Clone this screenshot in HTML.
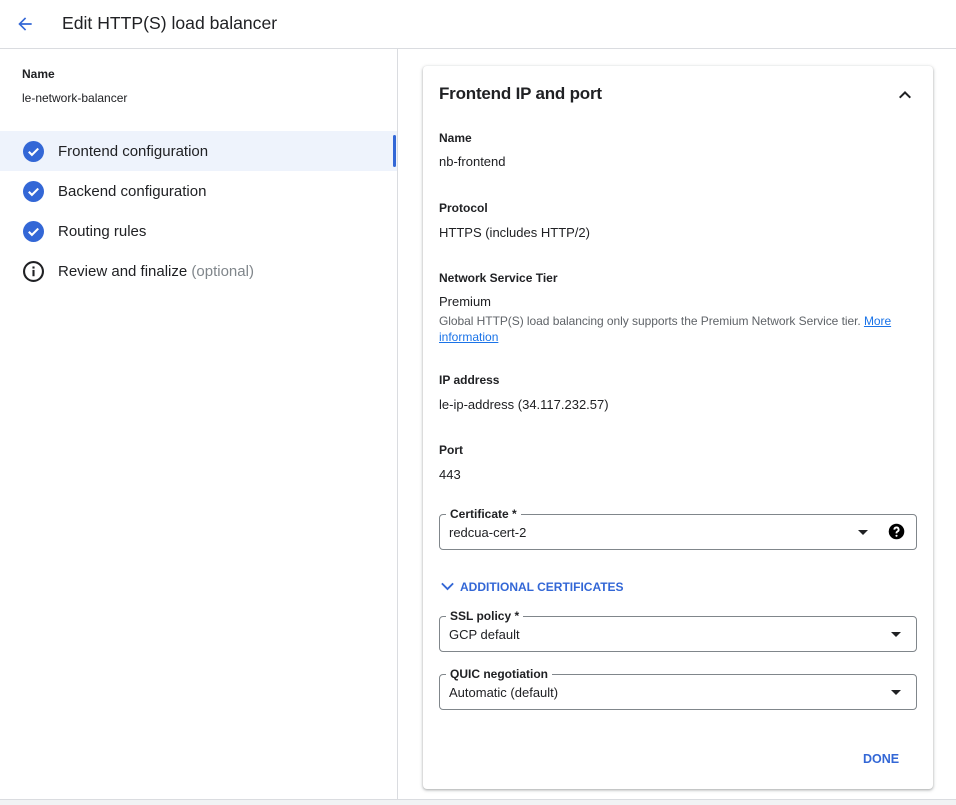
<!DOCTYPE html>
<html><head><meta charset="utf-8"><style>
*{margin:0;padding:0;box-sizing:border-box}
body{width:956px;height:805px;overflow:hidden;background:#fff;font-family:"Liberation Sans",Arial,sans-serif;color:#202124;position:relative}
.a{position:absolute;white-space:nowrap}
.lbl{font-size:13px;font-weight:bold;line-height:16px}
.val{font-size:13px;line-height:16px}
.field{position:absolute;left:439px;width:478px;height:36px;border:1px solid #80868b;border-radius:4px}
.field .fl{position:absolute;left:6px;top:-9px;background:#fff;padding:0 4px;font-size:12px;font-weight:bold;line-height:16px}
.field .fv{position:absolute;left:9px;top:10px;font-size:13px;line-height:16px}
.tri{position:absolute;width:0;height:0;border-left:5px solid transparent;border-right:5px solid transparent;border-top:5px solid #202124}
</style></head><body>
<svg class="a" style="left:15px;top:14px" width="20" height="20" viewBox="0 0 24 24"><path d="M20 11H7.83l5.59-5.59L12 4l-8 8 8 8 1.41-1.41L7.83 13H20v-2z" fill="#3367d6"/></svg>
<div class="a" style="left:62px;top:12px;font-size:17.6px;line-height:22px">Edit HTTP(S) load balancer</div>
<div class="a" style="left:0;top:48px;width:956px;height:1px;background:#dadce0"></div>
<div class="a" style="left:397px;top:49px;width:1px;height:751px;background:#dadce0"></div>
<div class="a" style="left:0;top:799px;width:956px;height:6px;background:#f1f3f4;border-top:1px solid #dadce0"></div>

<div class="a lbl" style="left:22px;top:66px;font-size:12px">Name</div>
<div class="a val" style="left:22px;top:90px;font-size:12px">le-network-balancer</div>

<div class="a" style="left:0;top:131px;width:397px;height:40px;background:#eef3fc"></div>
<div class="a" style="left:393px;top:135px;width:3px;height:32px;background:#3367d6;border-radius:2px"></div>
<svg class="a" style="left:23px;top:141px" width="21" height="21" viewBox="0 0 20 20"><circle cx="10" cy="10" r="10" fill="#3367d6"/><path d="M5.5 10.2l3 3 6-6" stroke="#fff" stroke-width="2" fill="none"/></svg>
<div class="a" style="left:58px;top:143px;font-size:15px;line-height:18px">Frontend configuration</div>
<svg class="a" style="left:23px;top:181px" width="21" height="21" viewBox="0 0 20 20"><circle cx="10" cy="10" r="10" fill="#3367d6"/><path d="M5.5 10.2l3 3 6-6" stroke="#fff" stroke-width="2" fill="none"/></svg>
<div class="a" style="left:58px;top:183px;font-size:15px;line-height:18px">Backend configuration</div>
<svg class="a" style="left:23px;top:221px" width="21" height="21" viewBox="0 0 20 20"><circle cx="10" cy="10" r="10" fill="#3367d6"/><path d="M5.5 10.2l3 3 6-6" stroke="#fff" stroke-width="2" fill="none"/></svg>
<div class="a" style="left:58px;top:223px;font-size:15px;line-height:18px">Routing rules</div>
<svg class="a" style="left:23px;top:261px" width="21" height="21" viewBox="0 0 20 20"><circle cx="10" cy="10" r="9" fill="none" stroke="#202124" stroke-width="2"/><rect x="9" y="8.5" width="2" height="6" fill="#202124"/><rect x="9" y="5.2" width="2" height="2" fill="#202124"/></svg>
<div class="a" style="left:58px;top:263px;font-size:15px;line-height:18px">Review and finalize <span style="color:#80868b">(optional)</span></div>

<div class="a" style="left:423px;top:66px;width:510px;height:723px;border-radius:4px;box-shadow:0 1px 2px rgba(60,64,67,.3),0 1px 3px 1px rgba(60,64,67,.15);background:#fff"></div>
<div class="a" style="left:439px;top:83px;font-size:17px;font-weight:bold;line-height:22px;letter-spacing:-0.2px">Frontend IP and port</div>
<svg class="a" style="left:893px;top:83px" width="24" height="24" viewBox="0 0 24 24"><path d="M7.41 15.41L12 10.83l4.59 4.58L18 14l-6-6-6 6z" fill="#202124"/></svg>

<div class="a lbl" style="left:439px;top:130px;font-size:12px">Name</div>
<div class="a val" style="left:439px;top:154px">nb-frontend</div>
<div class="a lbl" style="left:439px;top:200px;font-size:12px">Protocol</div>
<div class="a val" style="left:439px;top:225px">HTTPS (includes HTTP/2)</div>
<div class="a lbl" style="left:439px;top:270px;font-size:12px">Network Service Tier</div>
<div class="a val" style="left:439px;top:294px">Premium</div>
<div class="a" style="left:439px;top:313px;font-size:12px;line-height:16px;color:#5f6368;letter-spacing:-0.05px">Global HTTP(S) load balancing only supports the Premium Network Service tier. <span style="color:#1a73e8;text-decoration:underline">More</span></div>
<div class="a" style="left:439px;top:329px;font-size:12px;line-height:16px;color:#1a73e8;text-decoration:underline">information</div>
<div class="a lbl" style="left:439px;top:372px;font-size:12px">IP address</div>
<div class="a val" style="left:439px;top:397px">le-ip-address (34.117.232.57)</div>
<div class="a lbl" style="left:439px;top:442px;font-size:12px">Port</div>
<div class="a val" style="left:439px;top:467px">443</div>

<div class="field" style="top:514px"><div class="fl">Certificate *</div><div class="fv">redcua-cert-2</div>
<div class="tri" style="left:418px;top:15px"></div>
<svg class="a" style="left:448px;top:8px" width="17" height="17" viewBox="0 0 24 24"><circle cx="12" cy="12" r="11" fill="#000"/><path d="M9 9.3a3 3 0 1 1 4.2 2.7c-.9.5-1.2 1-1.2 2v.6" stroke="#fff" stroke-width="2.6" fill="none"/><circle cx="12" cy="18" r="1.5" fill="#fff"/></svg></div>

<svg class="a" style="left:440px;top:579px" width="15" height="15" viewBox="0 0 24 24"><path d="M3 7l9 9 9-9" stroke="#3367d6" stroke-width="3" fill="none"/></svg>
<div class="a" style="left:460px;top:579px;font-size:12px;font-weight:bold;line-height:16px;color:#3367d6">ADDITIONAL CERTIFICATES</div>

<div class="field" style="top:616px"><div class="fl">SSL policy *</div><div class="fv">GCP default</div><div class="tri" style="left:451px;top:15px"></div></div>
<div class="field" style="top:674px"><div class="fl">QUIC negotiation</div><div class="fv">Automatic (default)</div><div class="tri" style="left:451px;top:15px"></div></div>

<div class="a" style="left:863px;top:751px;font-size:12.5px;font-weight:bold;line-height:16px;color:#3367d6">DONE</div>
</body></html>
